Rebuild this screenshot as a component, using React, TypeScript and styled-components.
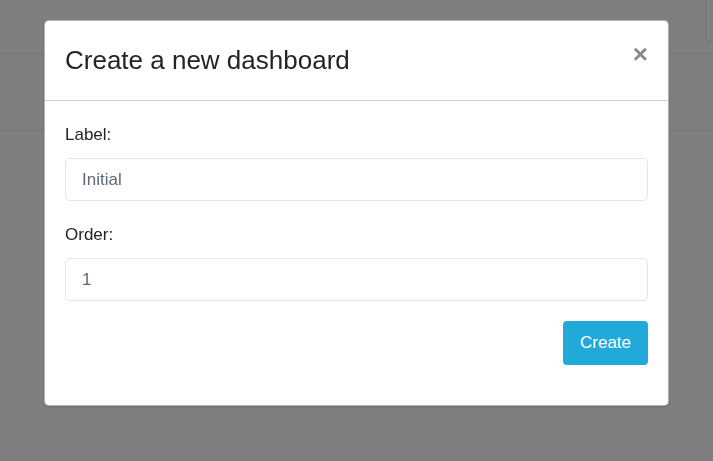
import React from "react";
import styled, { createGlobalStyle } from "styled-components";

const Global = createGlobalStyle`
  html, body { margin: 0; padding: 0; }
  body {
    font-family: "Liberation Sans", Arial, sans-serif;
    background: #ffffff;
    color: #212529;
    width: 713px;
    height: 461px;
    overflow: hidden;
  }
  * { box-sizing: border-box; }
`;

const Page = styled.div`
  width: 713px;
  height: 461px;
  background: #ffffff;
`;

const TopBar = styled.div`
  height: 54px;
  border-bottom: 1px solid #ececec;
  display: flex;
  justify-content: flex-end;
  align-items: flex-start;
`;

const TopBox = styled.div`
  width: 20px;
  height: 42px;
  margin-right: -12px;
  border: 1px solid #e4e4e4;
  border-top: none;
  border-radius: 0 0 4px 4px;
`;

const SubBar = styled.div`
  height: 77px;
  border-bottom: 1px solid #ececec;
`;

const Overlay = styled.div`
  position: fixed;
  inset: 0;
  background: rgba(0, 0, 0, 0.5);
  display: flex;
  justify-content: center;
  align-items: flex-start;
`;

const Modal = styled.div`
  margin-top: 20px;
  width: 625px;
  background: #ffffff;
  border: 1px solid rgba(0, 0, 0, 0.3);
  border-radius: 5px;
  box-shadow: 0 1px 3px rgba(0, 0, 0, 0.15);
`;

const Header = styled.div`
  display: flex;
  justify-content: space-between;
  align-items: flex-start;
  padding: 24px 20px 25px 20px;
  border-bottom: 1px solid #c9d1d9;
`;

const Title = styled.h4`
  margin: 0;
  font-size: 26px;
  line-height: 30px;
  font-weight: 400;
  color: #212529;
`;

const Close = styled.button`
  border: none;
  background: transparent;
  padding: 0;
  margin: -3px 0 0 0;
  font-family: "Liberation Sans", Arial, sans-serif;
  font-size: 26px;
  line-height: 24px;
  font-weight: 700;
  color: #8a8a8a;
  cursor: pointer;
`;

const Body = styled.div`
  padding: 21px 20px 40px 20px;
  display: flex;
  flex-direction: column;
`;

const Group = styled.div`
  display: flex;
  flex-direction: column;
  margin-bottom: 21px;
`;

const Label = styled.label`
  font-size: 17px;
  line-height: 25px;
  color: #212529;
  margin-bottom: 11px;
`;

const Input = styled.input`
  height: 43px;
  padding: 0 16px;
  font-family: "Liberation Sans", Arial, sans-serif;
  font-size: 17px;
  color: #5f6a74;
  border: 1px solid #e3e6e9;
  border-radius: 5px;
  background: #ffffff;
  outline: none;
`;

const Actions = styled.div`
  display: flex;
  justify-content: flex-end;
  margin-top: -1px;
`;

const Button = styled.button`
  width: 85px;
  height: 44px;
  border: none;
  border-radius: 4px;
  background: #21a9da;
  color: #ffffff;
  font-family: "Liberation Sans", Arial, sans-serif;
  font-size: 17px;
  cursor: pointer;
`;

export default function App() {
  return (
    <>
      <Global />
      <Page>
        <TopBar>
          <TopBox />
        </TopBar>
        <SubBar />
      </Page>
      <Overlay>
        <Modal>
          <Header>
            <Title>Create a new dashboard</Title>
            <Close aria-label="Close">×</Close>
          </Header>
          <Body>
            <Group>
              <Label>Label:</Label>
              <Input defaultValue="Initial" />
            </Group>
            <Group>
              <Label>Order:</Label>
              <Input defaultValue="1" />
            </Group>
            <Actions>
              <Button>Create</Button>
            </Actions>
          </Body>
        </Modal>
      </Overlay>
    </>
  );
}
